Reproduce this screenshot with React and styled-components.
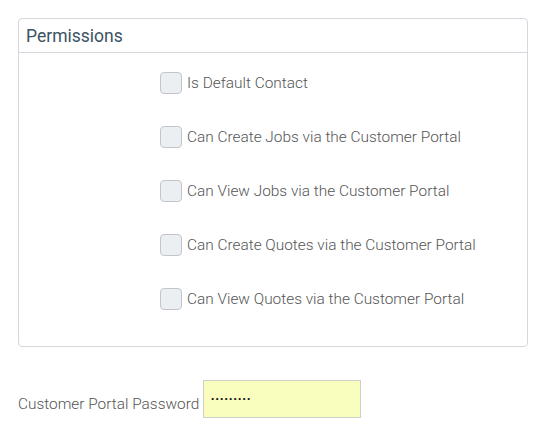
import React from 'react'
import styled, { createGlobalStyle } from 'styled-components'

const GlobalStyle = createGlobalStyle`
    body {
        margin: 0;
        background: #fff;
        font-family: Roboto, "Liberation Sans", sans-serif;
    }
`

const Page = styled.div`
    padding: 18px 17px 0 18px;
    width: 545px;
    box-sizing: border-box;
`

const Panel = styled.div`
    border: 1px solid #d6d6df;
    border-radius: 4px;
    background: #fff;
`

const PanelHeader = styled.div`
    height: 33px;
    border-bottom: 1px solid #d6d6df;
    display: flex;
    align-items: center;
    padding: 0 7px;
`

const Title = styled.h3`
    margin: 0;
    font-family: Roboto, "Liberation Sans", sans-serif;
    font-weight: 400;
    font-size: 17.5px;
    color: #3a5364;
`

const PanelBody = styled.div`
    padding: 19px 0 36px 141px;
    display: flex;
    flex-direction: column;
    gap: 32px;
`

const Row = styled.label`
    display: flex;
    align-items: center;
    gap: 5px;
    height: 22px;
    font-size: 15.4px;
    font-weight: 300;
    color: #555;
    cursor: pointer;
`

const Box = styled.span`
    width: 20px;
    height: 20px;
    border: 1px solid #c2c6cc;
    border-radius: 4px;
    background: #eceff2;
    flex-shrink: 0;
`

const PasswordRow = styled.div`
    margin-top: 33px;
    display: flex;
    align-items: flex-end;
    gap: 4px;
`

const FieldLabel = styled.span`
    font-size: 15.4px;
    font-weight: 300;
    color: #555;
    padding-bottom: 5px;
`

const Input = styled.input`
    width: 158px;
    height: 38px;
    box-sizing: border-box;
    border: 1px solid #cfcfcf;
    background: #f9fdbd;
    padding: 0 7px 2px;
    font-size: 8px;
    letter-spacing: 1.7px;
    color: #111;
    outline: none;
`

const permissions = [
    'Is Default Contact',
    'Can Create Jobs via the Customer Portal',
    'Can View Jobs via the Customer Portal',
    'Can Create Quotes via the Customer Portal',
    'Can View Quotes via the Customer Portal',
]

const App = () => {
    return (
        <Page>
            <GlobalStyle />
            <Panel>
                <PanelHeader>
                    <Title>Permissions</Title>
                </PanelHeader>
                <PanelBody>
                    {permissions.map(p => (
                        <Row key={p}>
                            <Box />
                            {p}
                        </Row>
                    ))}
                </PanelBody>
            </Panel>
            <PasswordRow>
                <FieldLabel>Customer Portal Password</FieldLabel>
                <Input type="password" defaultValue="password1" readOnly />
            </PasswordRow>
        </Page>
    )
}

export default App
